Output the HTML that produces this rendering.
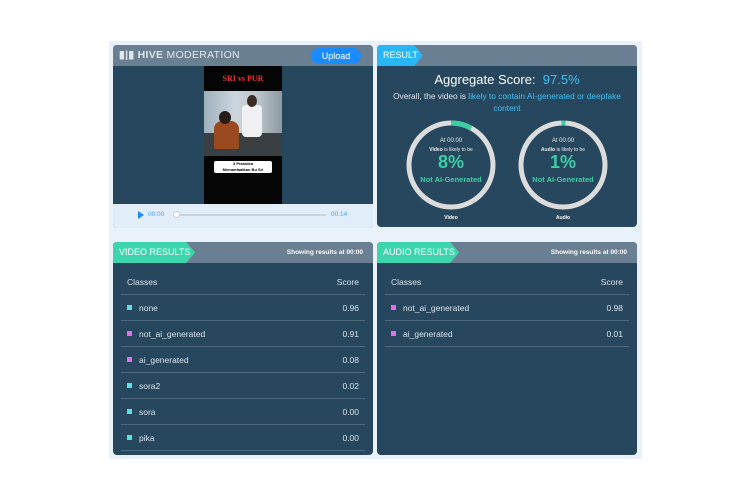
<!DOCTYPE html>
<html><head><meta charset="utf-8"><style>
*{margin:0;padding:0;box-sizing:border-box}
body{width:750px;height:500px;background:#fff;position:relative;overflow:hidden;font-family:"Liberation Sans",sans-serif}
.a{position:absolute}
.bg{left:109px;top:41px;width:533px;height:418px;background:#e9f1fb}
.panel{background:#27475f;border-radius:4px;overflow:hidden}
.hdr{position:absolute;left:0;top:0;right:0;height:21px;background:#6b7f92}
.tag{position:absolute;left:0;top:0;height:21px;color:#fff;font-size:9px;line-height:21px;padding-left:6px;clip-path:polygon(0 0,calc(100% - 9px) 0,100% 50%,calc(100% - 9px) 100%,0 100%)}
.show{position:absolute;right:10px;top:0;line-height:21px;color:#fff;font-size:6.5px;font-weight:bold}
.row{position:absolute;left:8px;right:8px;height:26px;border-bottom:1px solid #4d6a80;color:#d8e2ea;font-size:8.5px;line-height:26px}
.row .s{position:absolute;right:6px;top:0}
.row .sq{display:inline-block;width:5px;height:5px;margin:0 7px 0 6px;vertical-align:1px}
.c{background:#5fe0e8}.m{background:#e070e8}
</style></head><body>
<div class="a bg"></div>

<div class="a panel" style="left:113px;top:45px;width:260px;height:183px">
  <div class="hdr"></div>
  <div class="a" style="left:6px;top:4px;color:#dfe6ec;font-size:10.5px;line-height:13px;letter-spacing:0.3px"><span style="font-weight:bold">&#9646;|&#9646; HIVE</span> MODERATION</div>
  <div class="a" style="left:198px;top:3px;width:50px;height:16px;background:#1a8cff;border-radius:8px;color:#fff;font-size:9px;line-height:16px;text-align:center">Upload</div>
  <div class="a" style="left:91px;top:21px;width:78px;height:138px;background:#050505">
    <div class="a" style="left:0;top:8px;width:78px;text-align:center;color:#e33;font-family:'Liberation Serif',serif;font-weight:bold;font-size:8px">SRI vs PUR</div>
    <div class="a" style="left:0;top:25px;width:78px;height:65px;background:linear-gradient(90deg,#9fb0bd 0%,#cdd6dc 40%,#b9c3c8 70%,#8c9aa3 100%)">
      <div class="a" style="left:0;top:42px;width:78px;height:23px;background:#3a3f44"></div>
      <div class="a" style="left:10px;top:30px;width:25px;height:28px;background:#9a4a1e;border-radius:8px 8px 2px 2px"></div>
      <div class="a" style="left:15px;top:20px;width:12px;height:13px;background:#2a1d18;border-radius:50%"></div>
      <div class="a" style="left:38px;top:14px;width:20px;height:32px;background:#eef0f2;border-radius:4px"></div>
      <div class="a" style="left:43px;top:4px;width:10px;height:12px;background:#3b2b22;border-radius:50%"></div>
    </div>
    <div class="a" style="left:10px;top:95px;width:58px;height:12px;background:#fff;border-radius:2px;color:#000;font-size:4px;line-height:6px;text-align:center;font-weight:bold">3 Prasidea<br>Memanfaatkan Bu Sri</div>
  </div>
  <div class="a" style="left:0;top:159px;width:260px;height:24px;background:#e2edfa">
    <div class="a" style="left:25px;top:7px;width:0;height:0;border-left:6px solid #1a8cff;border-top:4px solid transparent;border-bottom:4px solid transparent"></div>
    <div class="a" style="left:35px;top:7px;color:#4aa0ff;font-size:6.5px">00:00</div>
    <div class="a" style="left:63px;top:10px;width:150px;height:2px;background:#c9d3de"></div>
    <div class="a" style="left:60px;top:7px;width:7px;height:7px;border-radius:50%;background:#fff;border:1px solid #ccd"></div>
    <div class="a" style="left:218px;top:7px;color:#4aa0ff;font-size:6.5px">00:14</div>
  </div>
</div>

<div class="a panel" style="left:377px;top:45px;width:260px;height:182px">
  <div class="hdr"></div>
  <div class="tag" style="background:#29b6f6;width:46px">RESULT</div>
  <div class="a" style="left:0;top:27px;width:260px;text-align:center;color:#fff;font-size:13px">Aggregate Score: &nbsp;<span style="color:#3fc0f5">97.5%</span></div>
  <div class="a" style="left:0;top:45px;width:260px;text-align:center;color:#dfe6ec;font-size:8.3px;line-height:12px">Overall, the video is <span style="color:#3fc0f5">likely to contain AI-generated or deepfake<br>content</span></div>
  <svg class="a" style="left:0;top:0" width="260" height="182">
    <circle cx="74" cy="120" r="42" fill="none" stroke="#dcdcdc" stroke-width="5"/>
    <circle cx="74" cy="120" r="42" fill="none" stroke="#3ccfa4" stroke-width="5" stroke-dasharray="21.1 300" transform="rotate(-90 74 120)"/>
    <circle cx="186" cy="120" r="42" fill="none" stroke="#dcdcdc" stroke-width="5"/>
    <circle cx="186" cy="120" r="42" fill="none" stroke="#3ccfa4" stroke-width="5" stroke-dasharray="4 300" transform="rotate(-92 186 120)"/>
  </svg>
  <div class="a" style="left:24px;top:92px;width:100px;text-align:center;color:#e6ebef;font-size:6px;line-height:9px">At 00:00<br><span style="font-size:5px"><b>Video</b> is likely to be</span></div>
  <div class="a" style="left:24px;top:107px;width:100px;text-align:center;color:#3ccfa4;font-size:18px;font-weight:bold">8%</div>
  <div class="a" style="left:24px;top:130px;width:100px;text-align:center;color:#3ccfa4;font-size:7.5px;font-weight:bold">Not AI-Generated</div>
  <div class="a" style="left:136px;top:92px;width:100px;text-align:center;color:#e6ebef;font-size:6px;line-height:9px">At 00:00<br><span style="font-size:5px"><b>Audio</b> is likely to be</span></div>
  <div class="a" style="left:136px;top:107px;width:100px;text-align:center;color:#3ccfa4;font-size:18px;font-weight:bold">1%</div>
  <div class="a" style="left:136px;top:130px;width:100px;text-align:center;color:#3ccfa4;font-size:7.5px;font-weight:bold">Not AI-Generated</div>
  <div class="a" style="left:24px;top:170px;width:100px;text-align:center;color:#fff;font-size:5px;font-weight:bold">Video</div>
  <div class="a" style="left:136px;top:170px;width:100px;text-align:center;color:#fff;font-size:5px;font-weight:bold">Audio</div>
</div>

<div class="a panel" style="left:113px;top:242px;width:260px;height:213px">
  <div class="hdr"></div>
  <div class="tag" style="background:#3dd5ac;width:82px">VIDEO RESULTS</div>
  <div class="show">Showing results at 00:00</div>
  <div class="row" style="top:27px"><span style="margin-left:6px">Classes</span><span class="s">Score</span></div>
  <div class="row" style="top:53px"><span class="sq c"></span>none<span class="s">0.96</span></div>
  <div class="row" style="top:79px"><span class="sq m"></span>not_ai_generated<span class="s">0.91</span></div>
  <div class="row" style="top:105px"><span class="sq m"></span>ai_generated<span class="s">0.08</span></div>
  <div class="row" style="top:131px"><span class="sq c"></span>sora2<span class="s">0.02</span></div>
  <div class="row" style="top:157px"><span class="sq c"></span>sora<span class="s">0.00</span></div>
  <div class="row" style="top:183px"><span class="sq c"></span>pika<span class="s">0.00</span></div>
</div>

<div class="a panel" style="left:377px;top:242px;width:260px;height:213px">
  <div class="hdr"></div>
  <div class="tag" style="background:#3dd5ac;width:82px">AUDIO RESULTS</div>
  <div class="show">Showing results at 00:00</div>
  <div class="row" style="top:27px"><span style="margin-left:6px">Classes</span><span class="s">Score</span></div>
  <div class="row" style="top:53px"><span class="sq m"></span>not_ai_generated<span class="s">0.98</span></div>
  <div class="row" style="top:79px"><span class="sq m"></span>ai_generated<span class="s">0.01</span></div>
</div>
</body></html>
